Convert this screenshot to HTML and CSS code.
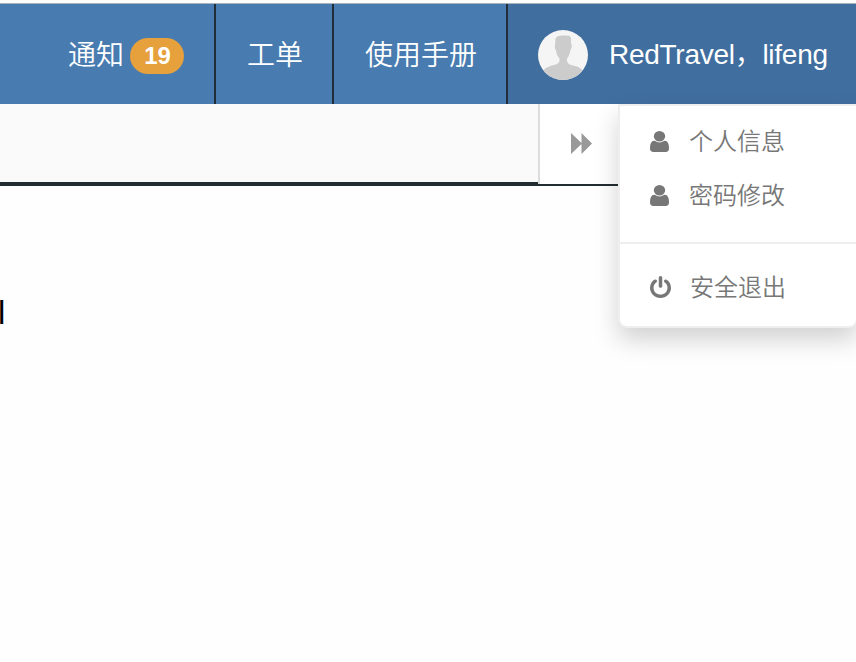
FILE: index.html
```html
<!DOCTYPE html>
<html lang="zh-CN">
<head>
<meta charset="utf-8">
<title>RedTravel</title>
<link rel="stylesheet" href="styles.css">
</head>
<body>
<header class="navbar">
  <a class="nav-item nav-notice"><span>通知</span><span class="badge">19</span></a>
  <a class="nav-item nav-ticket">工单</a>
  <a class="nav-item nav-manual">使用手册</a>
  <div class="nav-user">
    <svg class="avatar" viewBox="0 0 50 50">
      <path class="avatar-figure" d="M17.500 8.500Q19 5 26 5.500L31.500 5.800L33 8V14Q34.300 14.500 33.500 18L32.500 20Q31.500 26 29 28.500V31.500Q30 34 33 35Q42 36.500 44 40V50H6V40Q8 36.500 18 34.500Q21 33.500 21.500 31V28.500Q18.500 25.500 17.800 20Q16.300 18.500 17 15Z"/>
    </svg>
    <span class="user-name">RedTravel，lifeng</span>
    <div class="menu">
      <a class="menu-item"><svg class="icon-user" viewBox="256 128 1280 1536" preserveAspectRatio="none"><path d="M1536 1399q0 109-62.500 187t-150.500 78h-854q-88 0-150.500-78t-62.500-187q0-85 8.500-160.500t31.500-152 58.500-131 94-89 134.500-34.500q131 128 313 128t313-128q76 0 134.500 34.500t94 89 58.500 131 31.500 152 8.500 160.500zm-256-887q0 159-112.500 271.500t-271.500 112.500-271.500-112.500-112.500-271.500 112.500-271.500 271.500-112.500 271.500 112.500 112.500 271.500z"/></svg><span>个人信息</span></a>
      <a class="menu-item"><svg class="icon-user" viewBox="256 128 1280 1536" preserveAspectRatio="none"><path d="M1536 1399q0 109-62.500 187t-150.500 78h-854q-88 0-150.500-78t-62.500-187q0-85 8.500-160.500t31.500-152 58.500-131 94-89 134.500-34.500q131 128 313 128t313-128q76 0 134.500 34.500t94 89 58.500 131 31.500 152 8.500 160.500zm-256-887q0 159-112.500 271.500t-271.500 112.500-271.500-112.500-112.500-271.500 112.500-271.500 271.500-112.500 271.500 112.500 112.500 271.500z"/></svg><span>密码修改</span></a>
      <div class="menu-divider"></div>
      <a class="menu-item"><svg class="icon-power" viewBox="128 0 1536 1664" preserveAspectRatio="none"><path d="M1664 896q0 156-61 298t-164 245-245 164-298 61-298-61-245-164-164-245-61-298q0-182 80.500-343t226.500-270q43-32 95.500-25t83.500 50q32 42 24.500 94.500t-49.500 84.500q-98 74-151.500 181t-53.500 228q0 104 40.500 198.500t109.500 163.500 163.500 109.500 198.500 40.500 198.500-40.500 163.500-109.500 109.500-163.500 40.500-198.500q0-121-53.500-228t-151.500-181q-42-32-49.500-84.500t24.500-94.500q31-43 84-50t95 25q146 109 226.500 270t80.500 343zm-640-768v640q0 52-38 90t-90 38-90-38-38-90v-640q0-52 38-90t90-38 90 38 38 90z"/></svg><span>安全退出</span></a>
    </div>
  </div>
</header>
<div class="tabs">
  <div class="tabs-strip"></div>
  <div class="tabs-end">
    <div class="tabs-next"><svg class="icon-forward" viewBox="0 0 21 21"><path d="M0 0L10.500 10V0L21 10.500L10.500 21V11L0 21Z"/></svg></div>
  </div>
</div>
<main class="content">l</main>
</body>
</html>
```
FILE: styles.css
```css
* {
  box-sizing: border-box;
}

body {
  margin: 0;
  height: 662px;
  overflow: hidden;
  background: #fefefe;
  font-family: "Liberation Sans", "Noto Sans CJK SC", sans-serif;
  font-weight: 350;
}

.navbar {
  display: flex;
  height: 104px;
  border-top: 3px solid #fdfdfd;
  box-shadow: inset 0 1px #a9b3bc;
  padding-top: 1px;
  color: #fff;
  font-size: 28px;
  line-height: 100px;
  white-space: nowrap;
}

.nav-item {
  display: flex;
  align-items: center;
  padding-top: 3px;
  background: #487bb0;
  border-right: 2px solid #222d3a;
  line-height: 97px;
}

.nav-notice {
  width: 216px;
  padding-left: 68px;
}

.nav-ticket {
  width: 118px;
  padding-left: 31px;
}

.nav-manual {
  width: 174px;
  padding-left: 31px;
}

.badge {
  width: 54px;
  height: 36px;
  margin: 1px 0 0 6px;
  padding-left: 1px;
  border-radius: 18px;
  background: #e6a03c;
  font-size: 24px;
  font-weight: 700;
  line-height: 36px;
  text-align: center;
}

.nav-user {
  position: relative;
  display: flex;
  flex: 1;
  align-items: center;
  gap: 21px;
  padding: 2px 0 0 30px;
  background: #406e9e;
  line-height: 98px;
}

.user-name {
  letter-spacing: -0.27px;
}

.avatar {
  width: 50px;
  height: 50px;
  border-radius: 50%;
  background: #f5f5f5;
}

.avatar-figure {
  fill: #ccc;
}

.menu {
  position: absolute;
  top: 100px;
  right: -2px;
  width: 240px;
  height: 224px;
  padding-top: 9px;
  border: 2px solid #eee;
  border-radius: 0 0 9px 9px;
  background: #fff;
  box-shadow: 0 12px 24px rgba(0, 0, 0, 0.175);
  color: #777;
  font-size: 24px;
}

.menu-item {
  display: flex;
  align-items: center;
  height: 54px;
  padding-left: 30px;
  line-height: 54px;
}

.menu-item svg {
  margin: 0 20px 2px 0;
  fill: #777;
}

.icon-user {
  width: 19px;
  height: 21px;
}

.menu-item .icon-power {
  width: 21px;
  height: 22px;
  margin-right: 19px;
}

.menu-divider {
  height: 2px;
  margin: 19px 0 17px;
  background: #eee;
}

.tabs {
  display: flex;
  height: 82px;
}

.tabs-strip {
  width: 538px;
  border-bottom: 4px solid #222d32;
  background: #fafafa;
}

.tabs-end {
  flex: 1;
  border-bottom: 2px solid #222d32;
  background: #fff;
}

.tabs-next {
  display: flex;
  align-items: center;
  height: 80px;
  padding: 0 0 2px 31px;
  border-left: 2px solid #ddd;
}

.icon-forward {
  width: 21px;
  height: 21px;
  fill: #999;
}

.content {
  margin: 108px 0 0 -2px;
  color: #000;
  font-size: 33px;
  line-height: 38px;
}
```
